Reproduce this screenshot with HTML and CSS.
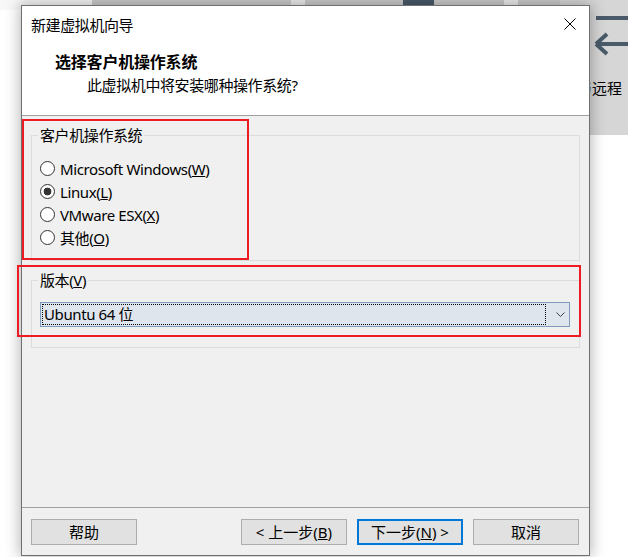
FILE: index.html
```html
<!DOCTYPE html>
<html lang="zh-CN">
<head>
  <meta charset="UTF-8" />
  <title>新建虚拟机向导</title>
  <link rel="stylesheet" href="styles.css">
</head>
<body>
<div class="desktop">

  <!-- 背后的主程序窗口 -->
  <div class="app-strip">
    <span class="seg seg-light seg-first"></span>
    <span class="seg seg-gray seg-wide"></span>
    <span class="seg seg-light seg-gap"></span>
    <span class="seg seg-gray seg-wide"><i class="strip-tab"></i></span>
    <span class="seg seg-light seg-gap"></span>
    <span class="seg seg-gray seg-rest"></span>
  </div>

  <div class="app-side">
    <i class="side-bar"></i>
    <svg class="side-arrow" width="36" height="26" viewBox="0 0 36 26">
      <path d="M3 13 L14 3 M3 13 L14 23 M3 13 H36" fill="none" stroke="#4a5a69" stroke-width="4"/>
    </svg>
    <span class="side-text">与远程</span>
  </div>

  <!-- 向导对话框 -->
  <div class="dialog">
    <div class="top">
      <div class="titlebar">
        <span class="title">新建虚拟机向导</span>
        <span class="close">
          <svg width="12" height="12" viewBox="0 0 12 12">
            <path d="M0.5 0.5 L11.5 11.5 M11.5 0.5 L0.5 11.5" stroke="#000" stroke-width="1"/>
          </svg>
        </span>
      </div>
      <h1 class="heading">选择客户机操作系统</h1>
      <p class="subheading">此虚拟机中将安装哪种操作系统?</p>
    </div>

    <div class="content">
      <fieldset class="group group-os">
        <legend>客户机操作系统</legend>
        <label class="radio"><input type="radio" name="os"><span>Microsoft Windows(<u>W</u>)</span></label>
        <label class="radio"><input type="radio" name="os" checked><span>Linux(<u>L</u>)</span></label>
        <label class="radio"><input type="radio" name="os"><span>VMware ESX(<u>X</u>)</span></label>
        <label class="radio"><input type="radio" name="os"><span>其他(<u>O</u>)</span></label>
      </fieldset>

      <fieldset class="group group-version">
        <legend>版本(<u>V</u>)</legend>
        <div class="combo">
          <span class="combo-value">Ubuntu 64 位</span>
          <span class="combo-arrow">
            <svg width="9" height="5" viewBox="0 0 9 5">
              <path d="M0.5 0.5 L4.5 4.5 L8.5 0.5" fill="none" stroke="#404040" stroke-width="1"/>
            </svg>
          </span>
        </div>
      </fieldset>
    </div>

    <div class="footer">
      <button class="btn">帮助</button>
      <button class="btn btn-back">&lt; 上一步(<u>B</u>)</button>
      <button class="btn btn-default">下一步(<u>N</u>) &gt;</button>
      <button class="btn">取消</button>
    </div>
  </div>

  <!-- 截图上的红色标注框 -->
  <div class="mark mark-os"></div>
  <div class="mark mark-version"></div>
</div>
</body>
</html>
```

FILE: styles.css
```css
* {
  box-sizing: border-box;
}

body {
  margin: 0;
  background: #fff;
  font-family: "Noto Sans", "Noto Sans CJK SC", sans-serif;
  font-size: 15px;
  letter-spacing: -0.4px;
  color: #000;
}

.desktop {
  position: relative;
  width: 628px;
  height: 557px;
  overflow: hidden;
}

/* 背后窗口的工具栏 */
.app-strip {
  position: absolute;
  top: 0;
  left: 0;
  right: 0;
  height: 10px;
  display: flex;
}

.seg {
  display: block;
  height: 100%;
  position: relative;
}

.seg-light { background: #ececec; }
.seg-gray { background: #cbcbcb; }
.seg-first { width: 92px; background: #f7f7f7; }
.seg-wide { width: 199px; }
.seg-gap { width: 14px; }
.seg-rest { flex: 1; }

.strip-tab {
  position: absolute;
  left: 98px;
  top: 0;
  width: 31px;
  height: 100%;
  background: #4a5a69;
}

.app-side {
  position: absolute;
  left: 560px;
  top: 0;
  width: 68px;
  height: 135px;
  background: #d6d6d6;
  overflow: hidden;
}

.side-bar {
  position: absolute;
  left: 36px;
  top: 16px;
  right: 0;
  height: 4px;
  background: #4a5a69;
}

.side-arrow {
  position: absolute;
  left: 33px;
  top: 31px;
}

.side-text {
  position: absolute;
  left: 17px;
  top: 77px;
  line-height: 22px;
  letter-spacing: 0;
  white-space: nowrap;
}

/* 对话框 */
.dialog {
  position: absolute;
  left: 21px;
  top: 5px;
  width: 569px;
  height: 551px;
  border: 1px solid #6f6f6f;
  background: #f0f0f0;
  display: flex;
  flex-direction: column;
  box-shadow: 0 0 14px 1px rgba(0, 0, 0, 0.3);
}

.top {
  height: 110px;
  background: #fff;
  border-bottom: 1px solid #a0a0a0;
}

.titlebar {
  height: 36px;
  padding: 0 13px 0 9px;
  display: flex;
  align-items: center;
  justify-content: space-between;
}

.close {
  display: flex;
}

.heading {
  margin: 9px 0 0;
  padding-left: 33px;
  font-size: 16px;
  font-weight: 700;
  letter-spacing: -0.2px;
  line-height: 22px;
}

.subheading {
  margin: 1px 0 0;
  padding-left: 65px;
  line-height: 22px;
}

.content {
  flex: 1;
  padding: 0 9px;
}

/* 分组框 */
.group {
  margin: 9px 0 0;
  border: 1px solid #dcdcdc;
  padding: 12px 9px 11px 8px;
  min-width: 0;
}

.group legend {
  padding: 0 2px;
  margin-left: -2px;
  line-height: 20px;
}

.group-version {
  margin-top: 9px;
  padding-top: 12px;
  padding-bottom: 20px;
}

.radio {
  display: flex;
  align-items: center;
  height: 23px;
}

.radio input {
  appearance: none;
  flex: none;
  margin: 0 5px 0 0;
  width: 15px;
  height: 15px;
  border: 1px solid #333;
  border-radius: 50%;
  background: #fff;
}

.radio input:checked {
  background: radial-gradient(circle, #333 0 3.6px, #fff 4.2px);
}

/* 下拉框 */
.combo {
  display: flex;
  height: 25px;
  border: 1px solid #7d9bba;
  background: #dfe5ec;
}

.combo-value {
  width: 504px;
  height: 21px;
  margin: 1px;
  padding-left: 1px;
  border: 1px dotted #000;
  line-height: 19px;
}

.combo-arrow {
  flex: 1;
  display: flex;
  align-items: center;
  justify-content: center;
  padding-left: 4px;
}

/* 底部按钮 */
.footer {
  height: 48px;
  border-top: 1px solid #a0a0a0;
  padding: 11px 10px 0 9px;
  display: flex;
  align-items: flex-start;
  gap: 10px;
}

.btn {
  width: 106px;
  height: 26px;
  padding: 0;
  border: 1px solid #adadad;
  background: #e1e1e1;
  font: inherit;
  line-height: 22px;
  color: #000;
}

.btn-back {
  margin-left: auto;
}

.btn-default {
  border: 2px solid #0078d7;
}

/* 红色标注 */
.mark {
  position: absolute;
  border: 2px solid #ed1c24;
}

.mark-os {
  left: 22px;
  top: 119px;
  width: 227px;
  height: 141px;
}

.mark-version {
  left: 17px;
  top: 265px;
  width: 564px;
  height: 72px;
}
```
